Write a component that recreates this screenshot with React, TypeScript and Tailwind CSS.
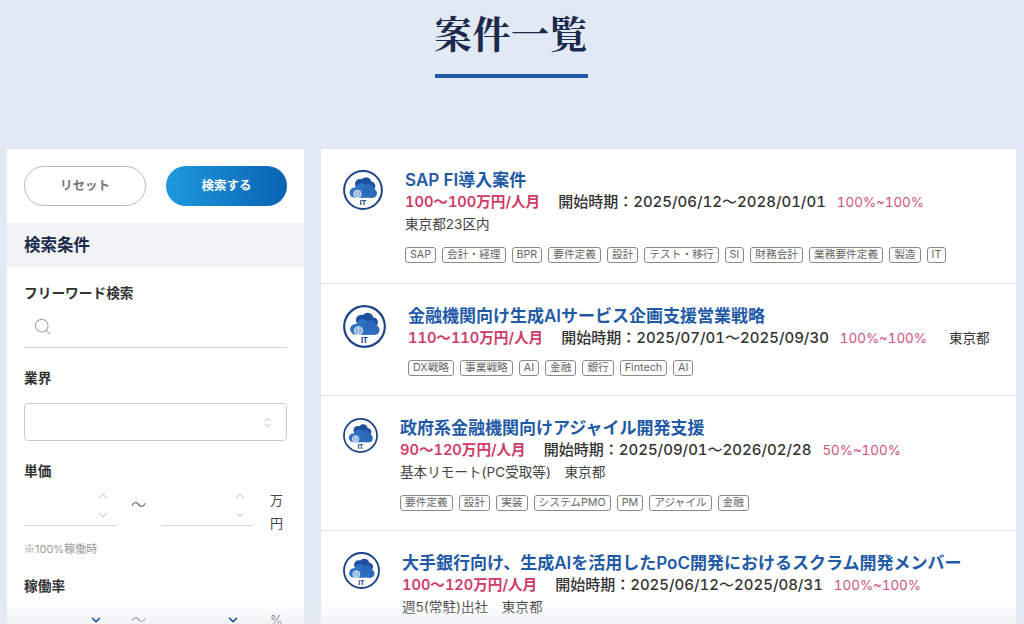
import { ChevronDown, ChevronUp, ChevronsUpDown, Search } from "lucide-react";

const font = "font-['Inter','Noto_Sans_CJK_JP',sans-serif]";

type Job = {
  title: string;
  price: string;
  period: string;
  rate: string;
  place?: string;
  inlinePlace?: string;
  tags: string[];
  icon: string;
  box: string;
};

const jobs: Job[] = [
  {
    title: "SAP FI導入案件",
    price: "100〜100万円/人月",
    period: "2025/06/12〜2028/01/01",
    rate: "100%~100%",
    place: "東京都23区内",
    tags: ["SAP", "会計・経理", "BPR", "要件定義", "設計", "テスト・移行", "SI", "財務会計", "業務要件定義", "製造", "IT"],
    icon: "h-[40px] w-[40px] mt-[1px]",
    box: "h-[135px] pt-[20px]",
  },
  {
    title: "金融機関向け生成AIサービス企画支援営業戦略",
    price: "110〜110万円/人月",
    period: "2025/07/01〜2025/09/30",
    rate: "100%~100%",
    inlinePlace: "東京都",
    tags: ["DX戦略", "事業戦略", "AI", "金融", "銀行", "Fintech", "AI"],
    icon: "h-[43px] w-[43px] mt-[0px]",
    box: "h-[112px] pt-[21px]",
  },
  {
    title: "政府系金融機関向けアジャイル開発支援",
    price: "90〜120万円/人月",
    period: "2025/09/01〜2026/02/28",
    rate: "50%~100%",
    place: "基本リモート(PC受取等)　東京都",
    tags: ["要件定義", "設計", "実装", "システムPMO", "PM", "アジャイル", "金融"],
    icon: "h-[35px] w-[35px] mt-[1px]",
    box: "h-[135px] pt-[21px]",
  },
  {
    title: "大手銀行向け、生成AIを活用したPoC開発におけるスクラム開発メンバー",
    price: "100〜120万円/人月",
    period: "2025/06/12〜2025/08/31",
    rate: "100%~100%",
    place: "週5(常駐)出社　東京都",
    tags: [],
    icon: "h-[37px] w-[37px] mt-[0px]",
    box: "h-[135px] pt-[21px]",
  },
];

function ItIcon({ className }: { className: string }) {
  return (
    <svg viewBox="0 0 40 40" className={`shrink-0 ${className}`}>
      <circle cx="20" cy="20" r="18.9" fill="#fff" stroke="#1d4388" strokeWidth="2" />
      {/* back cloud */}
      <circle cx="17" cy="14" r="5" fill="#1d4f9c" />
      <circle cx="23" cy="12.6" r="5.4" fill="#1d4f9c" />
      <circle cx="28" cy="16" r="4.4" fill="#1d4f9c" />
      {/* front cloud */}
      <circle cx="11.6" cy="22.6" r="5" fill="#2f72c4" />
      <circle cx="18.4" cy="19.4" r="6.4" fill="#2f72c4" />
      <circle cx="25.6" cy="19.6" r="5.6" fill="#2a69ba" />
      <circle cx="29.4" cy="23.2" r="4.6" fill="#2a69ba" />
      <rect x="11.6" y="22" width="18" height="5.8" fill="#2c6dbf" />
      <circle cx="14.4" cy="24" r="3.8" fill="#7ba3d8" stroke="#fff" strokeWidth=".7" />
      <path d="M10.6 24h7.6M14.4 20.2v7.6M11.4 22h6M11.4 26h6" stroke="#fff" strokeWidth=".45" />
      <text x="20" y="35.2" textAnchor="middle" fontSize="6.6" fontWeight="800" fill="#1d4388" fontFamily="Inter, sans-serif">IT</text>
    </svg>
  );
}

function JobRow({ job }: { job: Job }) {
  return (
    <div className={`flex items-start gap-[22px] border-b border-[#e3e7ee] bg-white pl-[22px] ${job.box}`}>
      <ItIcon className={job.icon} />
      <div className="min-w-0 flex-1">
        <h2 className="whitespace-nowrap text-[17px] leading-[22px] font-semibold text-[#1f5aa6]">{job.title}</h2>
        <div className="mt-[1px] flex h-[21px] items-center whitespace-nowrap tabular-nums">
          <span className="text-[14.6px] font-semibold text-[#cf3a68]">{job.price}</span>
          <span className="ml-[18px] text-[15px] font-medium text-[#333]">開始時期：{job.period}</span>
          <span className="ml-[11px] text-[13.4px] text-[#d0527b]">{job.rate}</span>
          {job.inlinePlace && <span className="ml-[22px] text-[13.5px] text-[#333]">{job.inlinePlace}</span>}
        </div>
        {job.place && <p className="mt-[1px] h-[20px] text-[13.6px] leading-[20px] text-[#444]">{job.place}</p>}
        <div className={`flex flex-wrap gap-[6px] ${job.place ? "mt-[13px]" : "mt-[11px]"}`}>
          {job.tags.map((tag, i) => (
            <span key={i} className="rounded-[3px] border border-[#8a8a8a] px-[4px] text-[10.7px] leading-[14px] text-[#666]">
              {tag}
            </span>
          ))}
        </div>
      </div>
    </div>
  );
}

function NumberBox() {
  return (
    <div className="flex h-[37px] w-[92px] shrink-0 flex-col items-end justify-between border-b border-[#d4d4d4] pr-[6px] pb-[3px] text-[#999]">
      <ChevronUp size={14} strokeWidth={1.2} />
      <ChevronDown size={14} strokeWidth={1.2} />
    </div>
  );
}

export default function App() {
  return (
    <div className={`relative h-[624px] overflow-hidden bg-[#e1e9f4] ${font}`}>
      <div className="flex h-[149px] flex-col items-center pr-[2px]">
        <h1 className="mt-[7px] text-[38px] leading-[50px] font-bold tracking-[0.5px] text-[#1b2a4a] font-['Noto_Serif_CJK_JP','Noto_Sans_CJK_JP',serif]">案件一覧</h1>
        <div className="mt-[17px] h-[4px] w-[153px] bg-[#2158a8]" />
      </div>

      <div className="flex items-start pl-[7px]">
        <aside className="w-[297px] shrink-0 bg-white">
          <div className="flex justify-between px-[17px] pt-[17px] pb-[17px]">
            <button className="h-[40px] w-[122px] rounded-full border border-[#bbb] text-[12.5px] font-semibold text-[#777]">リセット</button>
            <button className="h-[40px] w-[121px] rounded-full bg-gradient-to-r from-[#1f9ade] to-[#0a62b4] text-[12.5px] font-semibold text-white">検索する</button>
          </div>
          <div className="flex h-[44px] items-center bg-[#f2f3f5] px-[17px] text-[16.5px] font-semibold text-[#1b2a4a]">検索条件</div>
          <div className="px-[17px]">
            <p className="mt-[16px] text-[13.7px] leading-[20px] font-semibold text-[#333]">フリーワード検索</p>
            <div className="mt-[6px] flex h-[39px] items-center border-b border-[#d4d4d4] pb-[3px] pl-[9px] text-[#a5a5a5]">
              <Search size={19} strokeWidth={1.4} />
            </div>
            <p className="mt-[20px] text-[13.7px] leading-[20px] font-semibold text-[#333]">業界</p>
            <div className="mt-[15px] flex h-[38px] items-center justify-end rounded-[4px] border border-[#ccc] pr-[12px] text-[#999]">
              <ChevronsUpDown size={13} strokeWidth={1.3} />
            </div>
            <p className="mt-[20px] text-[13.7px] leading-[20px] font-semibold text-[#333]">単価</p>
            <div className="mt-[8px] flex h-[37px] items-start">
              <NumberBox />
              <span className="w-[45px] pt-[6px] text-center text-[15px] leading-[20px] font-light text-[#444]">〜</span>
              <NumberBox />
              <span className="ml-[17px] w-[13px] text-[13px] leading-[23px] text-[#444]">万円</span>
            </div>
            <p className="mt-[14px] text-[11px] leading-[16px] text-[#999]"><span className="font-['Noto_Sans_CJK_JP']">※</span>100%稼働時</p>
            <p className="mt-[19px] text-[13.7px] leading-[20px] font-semibold text-[#333]">稼働率</p>
            <div className="mt-[14px] flex items-start">
              <div className="relative z-10 flex w-[92px] justify-end pt-[3px] pr-[13px] text-[#1f4f96]"><ChevronDown size={14} strokeWidth={2.8} /></div>
              <span className="w-[45px] text-center text-[15px] leading-[20px] font-light text-[#444]">〜</span>
              <div className="relative z-10 flex w-[92px] justify-end pt-[3px] pr-[13px] text-[#1f4f96]"><ChevronDown size={14} strokeWidth={2.8} /></div>
              <span className="ml-[17px] text-[13px] leading-[20px] text-[#444]">%</span>
            </div>
          </div>
        </aside>

        <main className="ml-[17px] w-[695px] shrink-0">
          {jobs.map((job) => (
            <JobRow key={job.title} job={job} />
          ))}
        </main>
      </div>

      <div className="pointer-events-none absolute inset-x-0 bottom-0 h-[22px] bg-gradient-to-b from-white/0 to-[#e9ebef]/60" />
    </div>
  );
}
